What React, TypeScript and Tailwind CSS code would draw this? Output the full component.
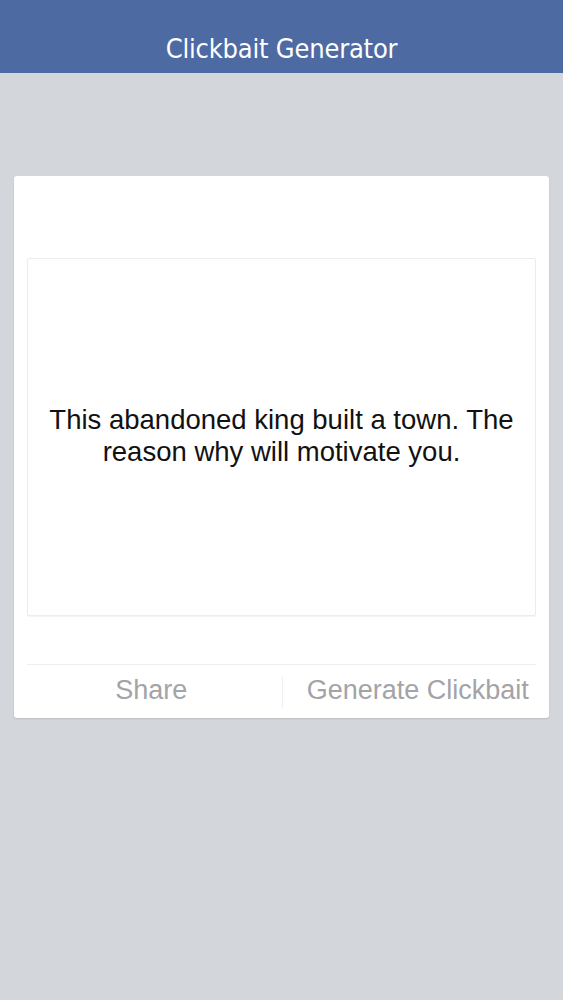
export default function App() {
  return (
    <div className="min-h-[1000px] bg-[#d3d6db]" style={{ fontFamily: '"Liberation Sans", Arial, sans-serif' }}>
      {/* Header */}
      <div className="h-[73px] bg-[#4e6aa3] flex items-end justify-center pb-[4px]">
        <h1
          className="text-white text-[27px] leading-[40px] tracking-[-0.2px]"
          style={{ fontFamily: '"DejaVu Sans Condensed", "DejaVu Sans", cursive' }}
        >
          Clickbait Generator
        </h1>
      </div>

      {/* Card */}
      <div className="mx-[14px] mt-[103px] bg-white rounded-[3px] shadow-[0_1px_2px_rgba(0,0,0,0.12)] px-[13px] pt-[82px]">
        <div className="h-[358px] border border-[#ececee] rounded-[2px] shadow-[0_1px_1px_rgba(0,0,0,0.05)] flex items-center justify-center px-[8px]">
          <p className="text-center text-[#111] text-[27.5px] leading-[32px] mt-[-2px]">
            This abandoned king built a town. The reason why will motivate you.
          </p>
        </div>

        <div className="mt-[48px] border-t border-[#eeeef0] grid grid-cols-2 h-[54px] items-center">
          <button className="h-full flex items-center justify-center text-[#a3a3a8] text-[27px] pb-[2px] pr-[6px]">
            Share
          </button>
          <div className="h-full flex items-center relative">
            <span className="absolute left-0 top-[12px] bottom-[10px] w-px bg-[#efeff1]" />
            <button className="w-full h-full flex items-center justify-center text-[#a3a3a8] text-[27px] pb-[2px] pl-[18px]">
              Generate Clickbait
            </button>
          </div>
        </div>
      </div>
    </div>
  );
}
